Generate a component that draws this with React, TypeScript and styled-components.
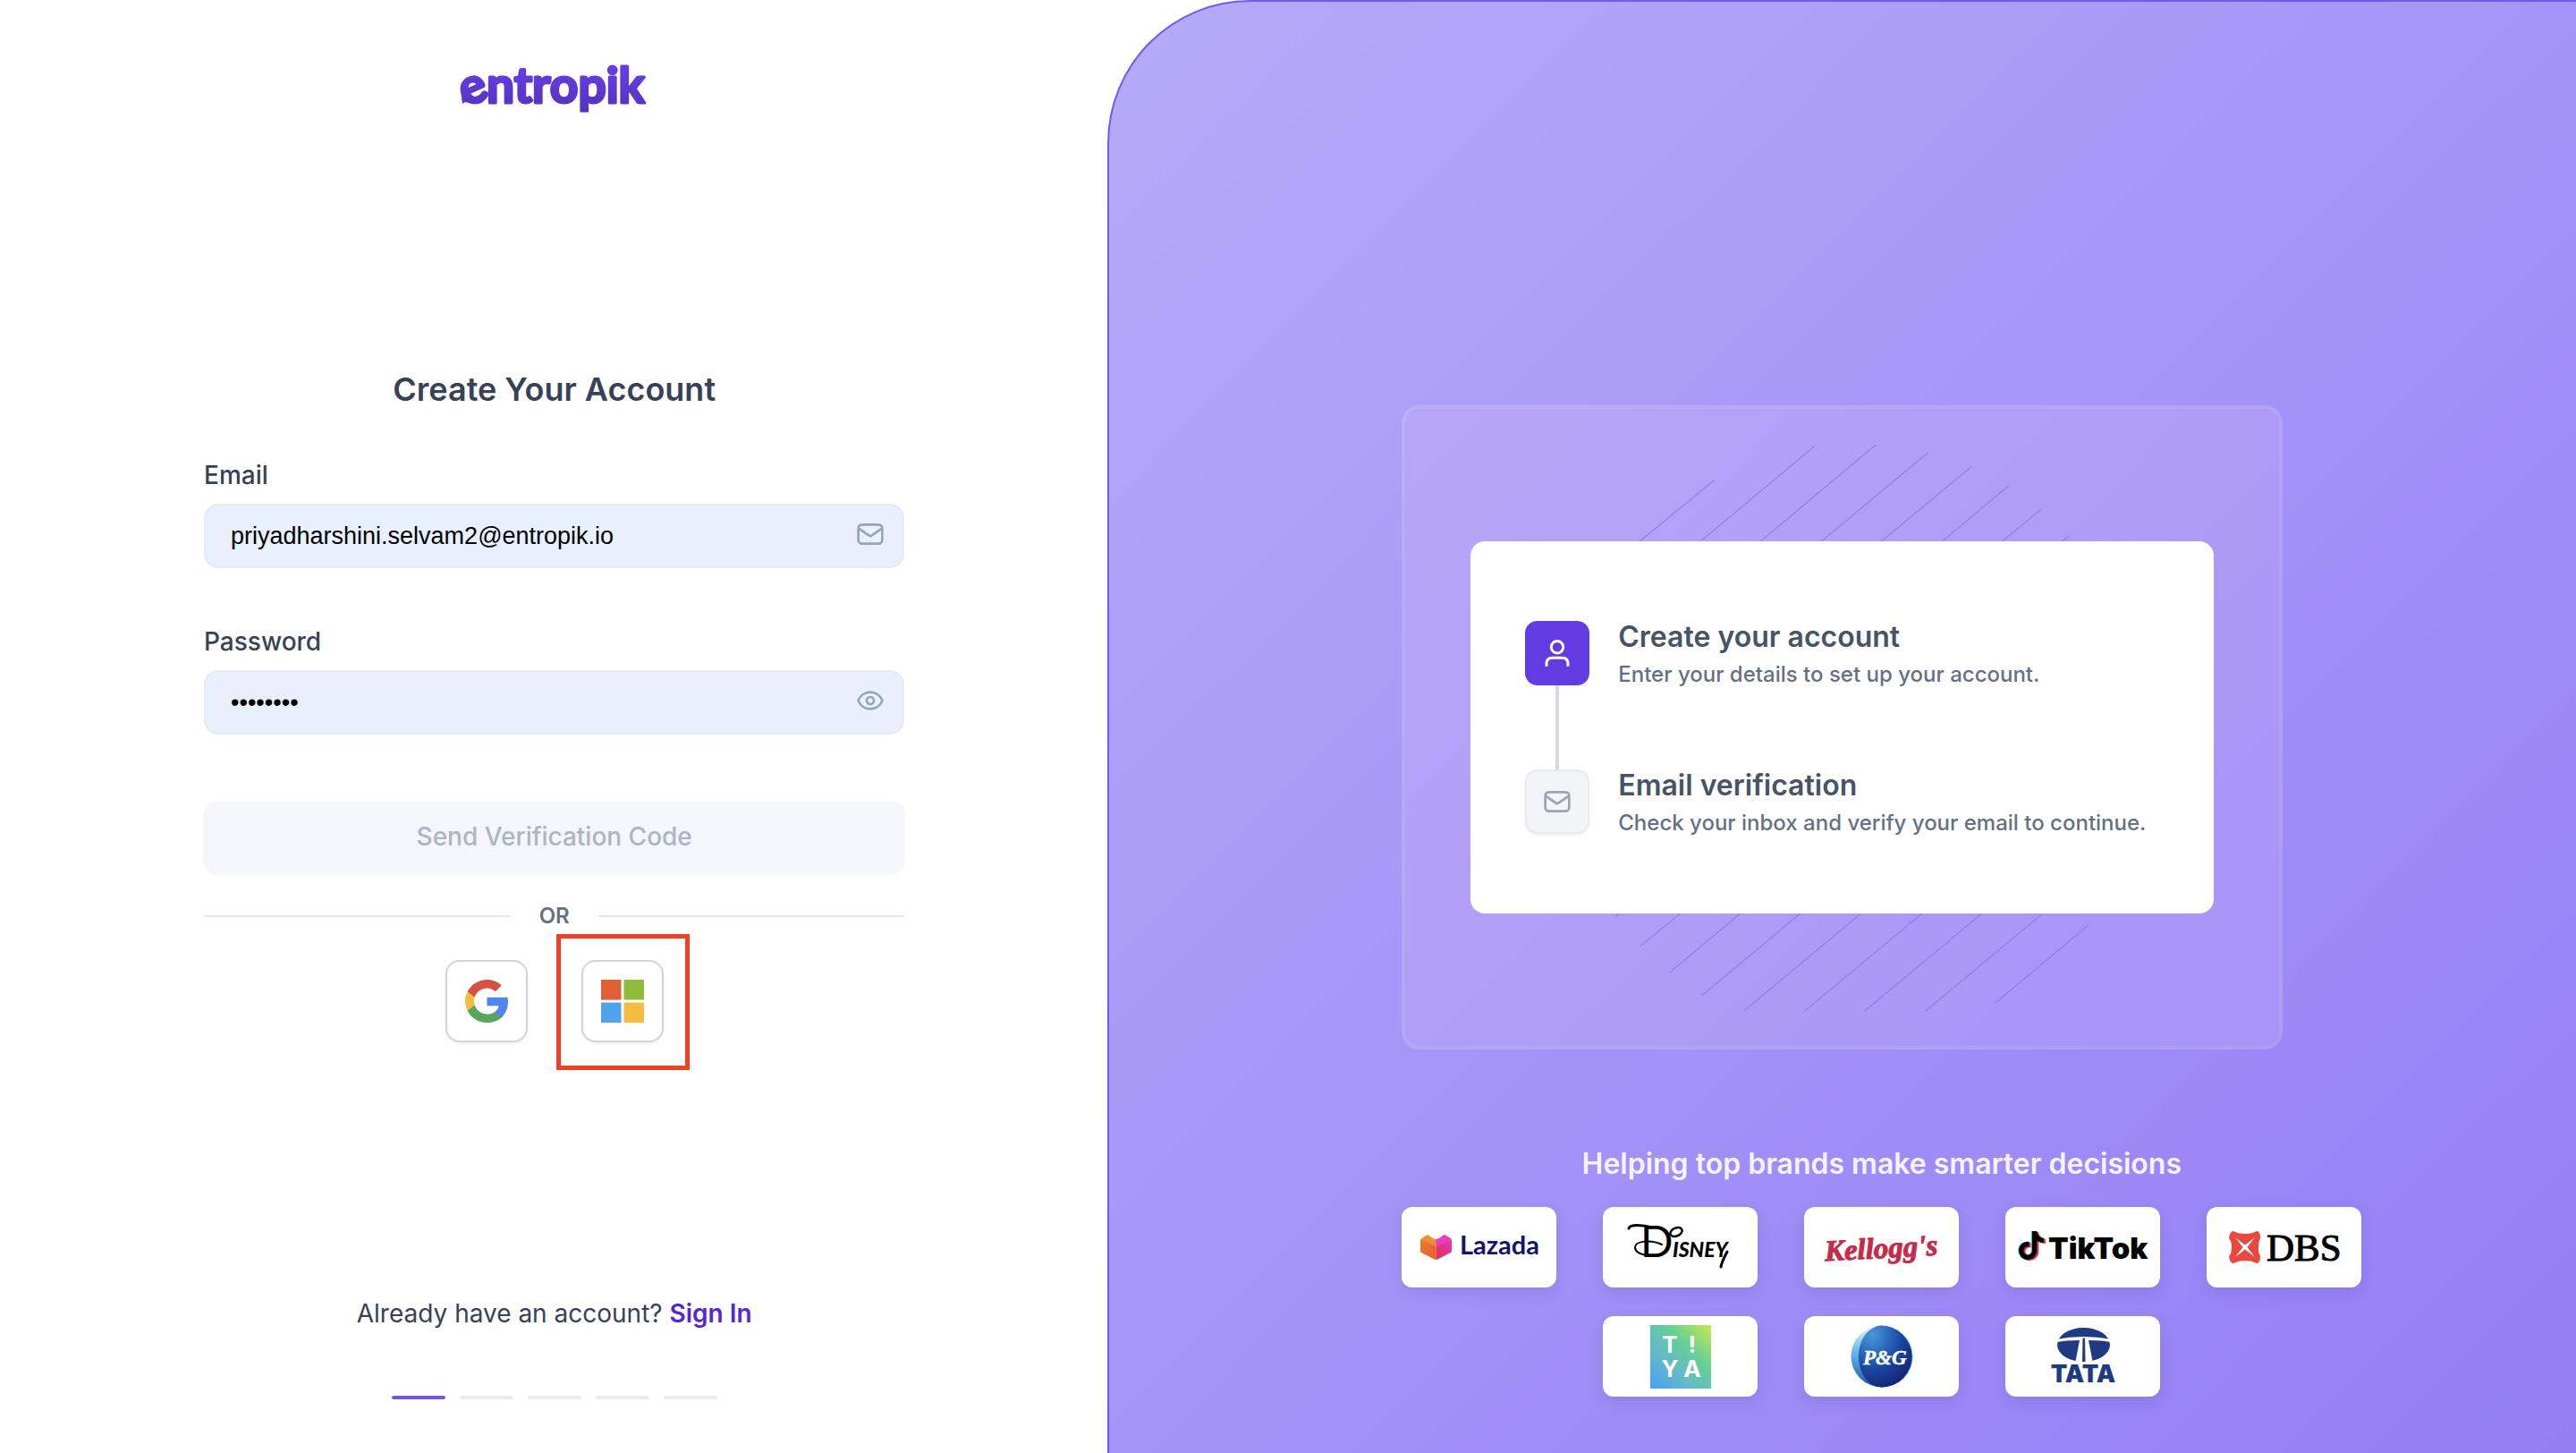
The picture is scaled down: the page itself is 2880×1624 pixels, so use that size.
import React, { useState } from "react";
import styled, { createGlobalStyle, css } from "styled-components";
import { Eye } from "lucide-react";
import { FaTiktok } from "react-icons/fa6";

const GlobalStyle = createGlobalStyle`
  *, *::before, *::after { box-sizing: border-box; }
  body {
    margin: 0;
    background: #ffffff;
    color: #384256;
    font-family: Inter, "Liberation Sans", sans-serif;
  }
  h1, h2, h3, p, ol, ul { margin: 0; padding: 0; }
  ol, ul { list-style: none; }
`;

const Page = styled.div`
  display: flex;
  min-height: 100vh;
`;

/* ---------- form side ---------- */

const FormSide = styled.main`
  display: flex;
  flex-direction: column;
  width: 43%;
  padding: 60px 227px 60px 228px;
`;

const Brand = styled.header`
  display: flex;
  justify-content: center;
`;

const FormArea = styled.div`
  display: flex;
  flex: 1;
  flex-direction: column;
  justify-content: center;
  padding-bottom: 14px;
`;

const Title = styled.h1`
  margin-bottom: 56px;
  font-size: 36px;
  line-height: 44px;
  font-weight: 600;
  text-align: center;
`;

const Form = styled.form`
  display: flex;
  flex-direction: column;
`;

const Field = styled.div`
  display: flex;
  flex-direction: column;
  gap: 14px;
  margin-bottom: 64px;
`;

const Label = styled.label`
  font-size: 28px;
  line-height: 36px;
  font-weight: 500;
`;

const InputWrap = styled.div`
  position: relative;
  display: flex;
`;

const Input = styled.input`
  width: 100%;
  height: 72px;
  padding: 0 80px 0 28px;
  border: 2px solid #e8eaf0;
  border-radius: 16px;
  background: #e8effd;
  color: #000000;
  font-family: "Liberation Sans", Arial, sans-serif;
  font-size: 27px;
  outline: none;
`;

const fieldIcon = css`
  position: absolute;
  top: 18px;
  right: 22px;
  display: flex;
  color: #9aa2b5;
`;

const FieldIcon = styled.span`
  ${fieldIcon}
`;

const FieldButton = styled.button`
  ${fieldIcon}
  padding: 0;
  border: 0;
  background: none;
`;

const SubmitButton = styled.button`
  height: 80px;
  margin-top: 10px;
  border: 0;
  border-radius: 16px;
  background: #f4f6fb;
  box-shadow: 0 2px 4px rgba(16, 24, 40, 0.05);
  color: #adb5c4;
  font-family: inherit;
  font-size: 28px;
  font-weight: 500;
`;

const Divider = styled.div`
  display: flex;
  align-items: center;
  gap: 32px;
  margin: 33px 0;
  color: #667085;
  font-size: 24px;
  line-height: 32px;
  font-weight: 600;

  &::before,
  &::after {
    content: "";
    flex: 1;
    height: 2px;
    background: #e9e6f4;
  }
`;

const SocialRow = styled.div`
  display: flex;
  justify-content: center;
  gap: 60px;
`;

const SocialButton = styled.button<{ $highlighted?: boolean }>`
  position: relative;
  display: flex;
  align-items: center;
  justify-content: center;
  width: 92px;
  height: 92px;
  padding: 0;
  border: 2px solid #d0d5dd;
  border-radius: 16px;
  background: #ffffff;
  box-shadow: 0 2px 4px rgba(16, 24, 40, 0.06);

  ${(p) =>
    p.$highlighted &&
    css`
      &::after {
        content: "";
        position: absolute;
        inset: -31px -31px -33px -30px;
        border: 5px solid #ee4125;
      }
    `}
`;

const Footer = styled.footer`
  display: flex;
  flex-direction: column;
  align-items: center;
  gap: 72px;
`;

const SignInText = styled.p`
  font-size: 28px;
  line-height: 40px;
`;

const SignInLink = styled.a`
  color: #5427d6;
  font-weight: 600;
  text-decoration: none;
`;

const Progress = styled.ol`
  display: flex;
  gap: 16px;
`;

const ProgressStep = styled.li<{ $active?: boolean }>`
  width: 60px;
  height: 4px;
  border-radius: 2px;
  background: ${(p) => (p.$active ? "#7a55d3" : "#e9eaf0")};
`;

/* ---------- promo side ---------- */

const PromoSide = styled.aside`
  display: flex;
  flex: 1;
  flex-direction: column;
  justify-content: flex-end;
  padding: 0 0 63px 11.35%;
  border: 2px solid #7359ee;
  border-width: 2px 0 0 2px;
  border-top-left-radius: 160px;
  background: linear-gradient(135deg, #b6aaf9, #937ef5);
`;

const Frame = styled.section`
  display: grid;
  width: 75%;
  border: 4px solid rgba(255, 255, 255, 0.08);
  border-radius: 20px;
  background: rgba(255, 225, 250, 0.12);

  > * {
    grid-area: 1 / 1;
  }
`;

const Stripes = styled.svg`
  width: 100%;
  height: 100%;
`;

const StepsCard = styled.div`
  margin: 148px 73px;
  padding: 85px 61px;
  border-radius: 16px;
  background: #ffffff;
`;

const Steps = styled.ol`
  display: flex;
  flex-direction: column;
  gap: 86px;
`;

const Step = styled.li`
  position: relative;
  display: flex;
  align-items: center;
  gap: 32px;

  & + &::before {
    content: "";
    position: absolute;
    left: 34px;
    bottom: 76px;
    width: 4px;
    height: 94px;
    background: #dad6ea;
  }
`;

const StepIcon = styled.span<{ $active?: boolean }>`
  display: flex;
  flex: none;
  align-items: center;
  justify-content: center;
  width: 72px;
  height: 72px;
  border: 2px solid ${(p) => (p.$active ? "#633be3" : "#e8eaf0")};
  border-radius: 14px;
  background: ${(p) => (p.$active ? "#633be3" : "#f2f4f8")};
  box-shadow: 0 2px 4px rgba(16, 24, 40, 0.06);
  color: ${(p) => (p.$active ? "#ffffff" : "#9aa2b5")};
`;

const StepText = styled.div`
  display: flex;
  flex-direction: column;
  gap: 4px;
`;

const StepTitle = styled.h2`
  color: #475467;
  font-size: 32px;
  line-height: 44px;
  font-weight: 600;
`;

const StepNote = styled.p`
  color: #667085;
  font-size: 24px;
  line-height: 32px;
  font-weight: 500;
`;

const Brands = styled.section`
  display: flex;
  flex-direction: column;
  gap: 26px;
  width: 1073px;
  max-width: 100%;
  margin-top: 106px;
`;

const BrandsTitle = styled.h2`
  color: #f6f2ff;
  font-size: 32px;
  line-height: 44px;
  font-weight: 600;
  text-align: center;
`;

const BrandList = styled.ul`
  display: flex;
  flex-wrap: wrap;
  justify-content: center;
  gap: 32px 52px;
`;

const BrandCard = styled.li`
  display: flex;
  width: 173px;
  height: 90px;
  border-radius: 12px;
  background: #ffffff;
  box-shadow: 0 6px 16px rgba(60, 30, 140, 0.12);
`;

/* ---------- icons ---------- */

const MailIcon = () => (
  <svg width="32" height="32" viewBox="0 0 24 24" fill="none" stroke="currentColor" strokeWidth="2" strokeLinecap="round" strokeLinejoin="round" aria-hidden="true">
    <path d="M2 7l8.165 5.715c.661.463.992.695 1.351.784.318.08.65.08.968 0 .36-.09.69-.321 1.351-.784L22 7M6.8 20h10.4c1.68 0 2.52 0 3.162-.327a3 3 0 0 0 1.311-1.311C22 17.72 22 16.88 22 15.2V8.8c0-1.68 0-2.52-.327-3.162a3 3 0 0 0-1.311-1.311C19.72 4 18.88 4 17.2 4H6.8c-1.68 0-2.52 0-3.162.327a3 3 0 0 0-1.311 1.311C2 6.28 2 7.12 2 8.8v6.4c0 1.68 0 2.52.327 3.162a3 3 0 0 0 1.311 1.311C4.28 20 5.12 20 6.8 20z" />
  </svg>
);

const UserIcon = () => (
  <svg width="36" height="36" viewBox="0 0 24 24" fill="none" stroke="currentColor" strokeWidth="2" strokeLinecap="round" strokeLinejoin="round" aria-hidden="true">
    <path d="M20 21c0-1.396 0-2.093-.172-2.661a4 4 0 0 0-2.667-2.667c-.568-.172-1.265-.172-2.661-.172h-5c-1.396 0-2.093 0-2.661.172a4 4 0 0 0-2.667 2.667C4 18.907 4 19.604 4 21M16.5 7.5a4.5 4.5 0 1 1-9 0 4.5 4.5 0 0 1 9 0z" />
  </svg>
);

const GoogleIcon = () => (
  <svg width="48" height="48" viewBox="0 0 48 48" aria-hidden="true">
    <path fill="#5383ec" d="M48 24.55c0-1.63-.15-3.2-.42-4.71H24.48v9.29h13.19c-.59 3-2.31 5.54-4.88 7.24v6.03h7.85C45.23 38.16 48 31.95 48 24.55z" />
    <path fill="#58a55c" d="M24.48 48c6.6 0 12.13-2.14 16.17-5.81l-7.85-6.03c-2.19 1.44-4.98 2.31-8.32 2.31-6.39 0-11.8-4.23-13.74-9.94H2.66v6.19C6.68 42.59 14.93 48 24.48 48z" />
    <path fill="#f3bd42" d="M10.74 28.53a14.1 14.1 0 0 1 0-9.07v-6.19H2.66a23.6 23.6 0 0 0 0 21.45z" />
    <path fill="#d85140" d="M24.48 9.52c3.61 0 6.84 1.22 9.39 3.61l6.95-6.82C36.6 2.43 31.07 0 24.48 0 14.93 0 6.68 5.41 2.66 13.27l8.08 6.19c1.94-5.7 7.35-9.94 13.74-9.94z" />
  </svg>
);

const MicrosoftIcon = () => (
  <svg width="48" height="48" viewBox="0 0 48 48" aria-hidden="true">
    <path fill="#df5f36" d="M0 0h22.5v22.5H0z" />
    <path fill="#8fbc3a" d="M25.5 0H48v22.5H25.5z" />
    <path fill="#4fa3ea" d="M0 25.5h22.5V48H0z" />
    <path fill="#f5bc42" d="M25.5 25.5H48V48H25.5z" />
  </svg>
);

const EntropikLogo = () => (
  <svg width="240" height="84" viewBox="-15 -5 240 84" overflow="visible" role="img" aria-label="entropik">
    <defs>
      <linearGradient id="ek" gradientUnits="userSpaceOnUse" x1="0" y1="10" x2="0" y2="60">
        <stop offset="0" stopColor="#673de6" />
        <stop offset="1" stopColor="#5433bb" />
      </linearGradient>
    </defs>
    <g fill="url(#ek)" stroke="url(#ek)" strokeWidth="3" strokeLinejoin="round" fontFamily="Lato, sans-serif" fontWeight="700" fontSize="55">
      <text transform="rotate(-24 16 36)" x="0" y="49">e</text>
      <text x="29" y="50">ntropik</text>
    </g>
    <path d="M0 36l2 15 3-2 4 1 19-5c-3 6-9 7-14 6z" fill="url(#ek)" />
  </svg>
);

/* Hatching that shows above and below the steps card. */
const hatchLines = [
  [1834, 605, 1918, 536],
  [1902, 605, 2029, 499],
  [1969, 605, 2098, 497],
  [2037, 605, 2156, 506],
  [2104, 605, 2204, 522],
  [2172, 605, 2246, 543],
  [2239, 605, 2283, 569],
  [2306, 605, 2315, 598],
  [1807, 1024, 1811, 1021],
  [1835, 1057, 1879, 1021],
  [1867, 1087, 1946, 1021],
  [1904, 1112, 2013, 1021],
  [1950, 1130, 2081, 1021],
  [2018, 1130, 2149, 1021],
  [2085, 1130, 2216, 1021],
  [2153, 1130, 2284, 1021],
  [2231, 1121, 2336, 1033],
];

/* ---------- customer logos ---------- */

const LogoSvg = ({ name, children }: { name: string; children: React.ReactNode }) => (
  <svg width="173" height="90" viewBox="0 0 173 90" role="img" aria-label={name}>
    {children}
  </svg>
);

const Lazada = () => (
  <LogoSvg name="Lazada">
    <defs>
      <linearGradient id="lzL" x1="0" y1="0" x2="1" y2="1">
        <stop offset="0" stopColor="#e87f2c" />
        <stop offset="1" stopColor="#ea5a2c" />
      </linearGradient>
      <linearGradient id="lzR" x1="1" y1="0" x2="0" y2="1">
        <stop offset="0" stopColor="#e336c0" />
        <stop offset="1" stopColor="#dd3350" />
      </linearGradient>
    </defs>
    <path d="M21 36v13q0 1.5 1 2l15 7.5q1 .5 1.5.5V42z" fill="url(#lzL)" />
    <path d="M56 36v13q0 1.5-1 2l-15 7.5q-1 .5-1.5.5V42z" fill="url(#lzR)" />
    <path d="M21 36l7-4.5q1-.5 2 0l5 3.5q3.5 2 7 0l5-3.5q1-.5 2 0l7 4.5-17.5 8z" fill="#ee8f33" />
    <path d="M38.5 44V36q2 0 3.5-1l5-3.5q1-.5 2 0l7 4.5z" fill="#e83cc4" />
    <text x="65" y="53" fontFamily="Lato, sans-serif" fontWeight="700" fontSize="29" fill="#14146e">Lazada</text>
  </LogoSvg>
);

const Disney = () => (
  <LogoSvg name="Disney">
    <g fill="none" stroke="#000000" strokeLinecap="round">
      <path d="M29 24c1-5 16-4 26-1" strokeWidth="3" />
      <path d="M66 42c-12-6-30-4-30 3 0 5 6 8 14 9" strokeWidth="2" />
      <ellipse cx="82" cy="28" rx="7" ry="4.5" transform="rotate(-24 82 28)" strokeWidth="2.5" />
      <path d="M139 50c-3 6-6 11-7 17" strokeWidth="3" />
    </g>
    <text y="56" fontFamily="Lato, sans-serif" fill="#000000">
      <tspan x="42" fontWeight="400" fontSize="48">D</tspan>
      <tspan x="78" fontWeight="900" fontStyle="italic" fontSize="33" style={{ fontVariant: "small-caps" }}>isney</tspan>
    </text>
  </LogoSvg>
);

const Kelloggs = () => (
  <LogoSvg name="Kellogg's">
    <text transform="rotate(-3 86 50)" x="23" y="57" fontFamily="Liberation Serif, serif" fontWeight="700" fontStyle="italic" fontSize="33" fill="#c52b4a" stroke="#c52b4a" strokeLinejoin="round">
      Kellogg's
    </text>
  </LogoSvg>
);

const TikTok = () => (
  <LogoSvg name="TikTok">
    <FaTiktok x="12" y="27" size={32} color="#5fdad6" />
    <FaTiktok x="15" y="28" size={32} color="#e8304f" />
    <FaTiktok x="13" y="27" size={32} color="#000000" />
    <text x="48" y="58" fontFamily="Inter, sans-serif" fontWeight="900" fontSize="33">TikTok</text>
  </LogoSvg>
);

const Dbs = () => (
  <LogoSvg name="DBS">
    <path d="M30 27q5 3 13 3t13-3q4 0 4 8-2 3-2 10t2 10q0 8-4 8-5-3-13-3t-13 3q-4 0-5-8 3-3 3-10t-3-10q1-8 5-8z" fill="#ea483f" />
    <path d="M32 34l11 8.500L54 34l-8.500 11L54 56l-11-8.500L32 56l8.500-11z" fill="#ffffff" />
    <text x="67" y="60" fontFamily="Liberation Serif, serif" fontSize="43" stroke="#000000">DBS</text>
  </LogoSvg>
);

const Tiya = () => (
  <LogoSvg name="TIYA">
    <defs>
      <linearGradient id="ty" x1="0" y1="1" x2="1" y2="0">
        <stop offset="0" stopColor="#45a2f8" />
        <stop offset=".35" stopColor="#66b9c6" />
        <stop offset=".62" stopColor="#62cf97" />
        <stop offset="1" stopColor="#c8e950" />
      </linearGradient>
    </defs>
    <rect x="53" y="10" width="68" height="71" fill="url(#ty)" />
    <g fontFamily="Inter, sans-serif" fontWeight="700" fontSize="26" fill="#ffffff" textAnchor="middle">
      <text x="75" y="41">T</text>
      <text x="100" y="41">!</text>
      <text x="75" y="68">Y</text>
      <text x="100" y="68">A</text>
    </g>
  </LogoSvg>
);

const Pg = () => (
  <LogoSvg name="P&G">
    <defs>
      <linearGradient id="pgO" x1="0" y1="0" x2="0" y2="1">
        <stop offset="0" stopColor="#e6f6fc" />
        <stop offset=".4" stopColor="#6bbce8" />
        <stop offset="1" stopColor="#2056ac" />
      </linearGradient>
      <radialGradient id="pgI" cx=".25" cy=".15" r="1">
        <stop offset="0" stopColor="#4698d8" />
        <stop offset=".55" stopColor="#1a48a4" />
        <stop offset="1" stopColor="#151a66" />
      </radialGradient>
    </defs>
    <circle cx="87" cy="45" r="34.5" fill="url(#pgO)" />
    <path d="M85 10.5a34.5 34.5 0 0 1 2 69C70 79 61 62 61 45c0-17 9-32 24-34.5z" fill="url(#pgI)" />
    <text x="66" y="54" fontFamily="Liberation Serif, serif" fontWeight="700" fontStyle="italic" fontSize="23" fill="#ffffff" stroke="#ffffff" strokeWidth=".5">P&amp;G</text>
  </LogoSvg>
);

const Tata = () => (
  <LogoSvg name="TATA">
    <ellipse cx="87.5" cy="32" rx="29.5" ry="19" fill="#1f3a83" />
    <path d="M56 26q31.5-6 63 0l-1 3q-10-2-25-2L98 53H78l5-26q-15 0-26 2z" fill="#ffffff" />
    <path d="M86.5 24.5H89L89.500 51H86z" fill="#1f3a83" />
    <text x="87" y="74" textAnchor="middle" fontFamily="Inter, sans-serif" fontWeight="900" fontSize="27" fill="#1f3a83">TATA</text>
  </LogoSvg>
);

const logos = [Lazada, Disney, Kelloggs, TikTok, Dbs, Tiya, Pg, Tata];

export default function App() {
  const [email, setEmail] = useState("priyadharshini.selvam2@entropik.io");
  const [password, setPassword] = useState("password");
  const [visible, setVisible] = useState(false);

  return (
    <>
      <GlobalStyle />
      <Page>
        <FormSide>
          <Brand>
            <EntropikLogo />
          </Brand>
          <FormArea>
            <Title>Create Your Account</Title>
            <Form onSubmit={(e) => e.preventDefault()}>
              <Field>
                <Label htmlFor="email">Email</Label>
                <InputWrap>
                  <Input id="email" type="email" value={email} onChange={(e) => setEmail(e.target.value)} />
                  <FieldIcon>
                    <MailIcon />
                  </FieldIcon>
                </InputWrap>
              </Field>
              <Field>
                <Label htmlFor="password">Password</Label>
                <InputWrap>
                  <Input
                    id="password"
                    type={visible ? "text" : "password"}
                    value={password}
                    onChange={(e) => setPassword(e.target.value)}
                  />
                  <FieldButton type="button" aria-label="Show password" onClick={() => setVisible(!visible)}>
                    <Eye size={32} />
                  </FieldButton>
                </InputWrap>
              </Field>
              <SubmitButton type="submit" disabled>
                Send Verification Code
              </SubmitButton>
            </Form>
            <Divider>OR</Divider>
            <SocialRow>
              <SocialButton type="button" aria-label="Continue with Google">
                <GoogleIcon />
              </SocialButton>
              <SocialButton type="button" aria-label="Continue with Microsoft" $highlighted>
                <MicrosoftIcon />
              </SocialButton>
            </SocialRow>
          </FormArea>
          <Footer>
            <SignInText>
              Already have an account? <SignInLink href="#signin">Sign In</SignInLink>
            </SignInText>
            <Progress>
              {[0, 1, 2, 3, 4].map((n) => (
                <ProgressStep key={n} $active={n === 0} />
              ))}
            </Progress>
          </Footer>
        </FormSide>

        <PromoSide>
          <Frame>
            <Stripes viewBox="1572 457 976 712" stroke="#8f76ee" aria-hidden="true">
              {hatchLines.map(([x1, y1, x2, y2]) => (
                <line key={`${x1}-${y1}`} x1={x1} y1={y1} x2={x2} y2={y2} />
              ))}
            </Stripes>
            <StepsCard>
              <Steps>
                <Step>
                  <StepIcon $active>
                    <UserIcon />
                  </StepIcon>
                  <StepText>
                    <StepTitle>Create your account</StepTitle>
                    <StepNote>Enter your details to set up your account.</StepNote>
                  </StepText>
                </Step>
                <Step>
                  <StepIcon>
                    <MailIcon />
                  </StepIcon>
                  <StepText>
                    <StepTitle>Email verification</StepTitle>
                    <StepNote>Check your inbox and verify your email to continue.</StepNote>
                  </StepText>
                </Step>
              </Steps>
            </StepsCard>
          </Frame>
          <Brands>
            <BrandsTitle>Helping top brands make smarter decisions</BrandsTitle>
            <BrandList>
              {logos.map((Logo, i) => (
                <BrandCard key={i}>
                  <Logo />
                </BrandCard>
              ))}
            </BrandList>
          </Brands>
        </PromoSide>
      </Page>
    </>
  );
}
